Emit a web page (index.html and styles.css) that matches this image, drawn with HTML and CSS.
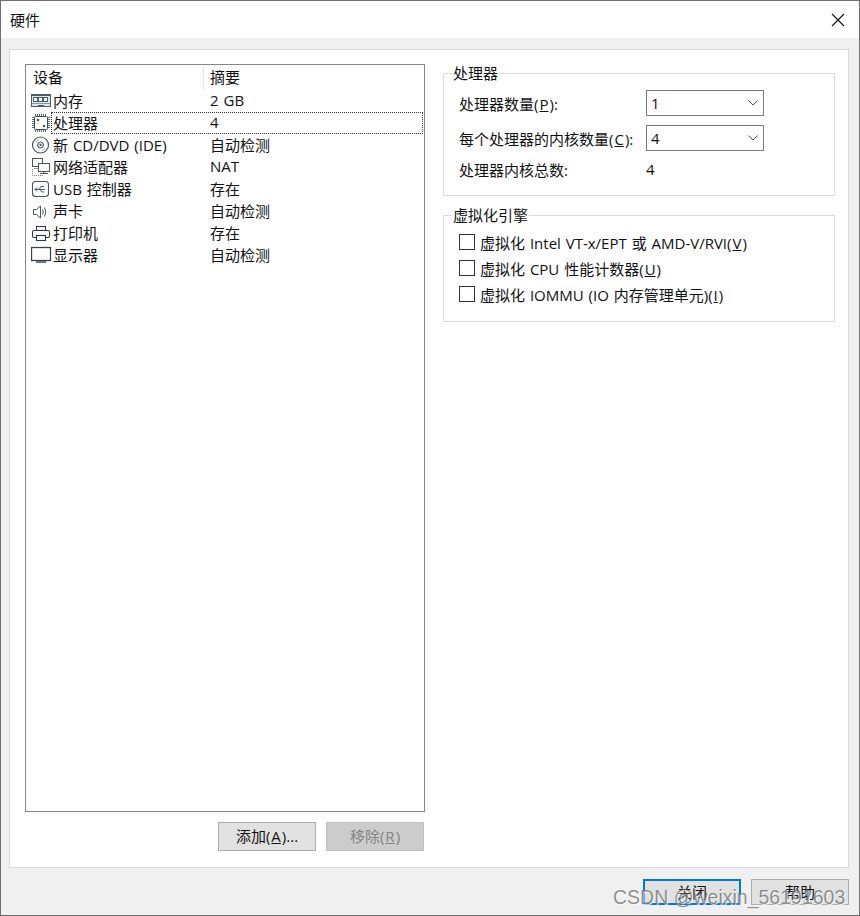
FILE: index.html
```html
<!DOCTYPE html>
<html lang="zh-CN">
<head>
<meta charset="utf-8">
<title>硬件</title>
<link rel="stylesheet" href="styles.css">
</head>
<body>
<div class="window">
  <header class="titlebar">
    <span class="title">硬件</span>
    <svg class="close" width="14" height="14" viewBox="0 0 14 14"><path d="M1 1l12 12M13 1L1 13" stroke="#111" stroke-width="1.1" fill="none"/></svg>
  </header>
  <div class="client">
    <main class="panel">
      <section class="left">
        <div class="listbox">
          <div class="list-head">
            <span class="col-a">设备</span>
            <span class="col-b">摘要</span>
          </div>
          <div class="row">
            <span class="ico"><svg width="21" height="22" viewBox="0 0 21 22"><rect x=".5" y="4.500" width="19" height="12" fill="#dfe6ea" stroke="#4f5b63"/><path d="M1 5.500h18" stroke="#4f5b63"/><rect x="2.500" y="7.500" width="4" height="4" fill="#fff" stroke="#4f5b63"/><rect x="7.500" y="7.500" width="4" height="4" fill="#fff" stroke="#4f5b63"/><rect x="12.500" y="7.500" width="4" height="4" fill="#fff" stroke="#4f5b63"/><path d="M1 13.500h18" stroke="#8b969d"/><path d="M7 15.500h6" stroke="#4f5b63"/></svg></span>
            <span class="name">内存</span><span class="val">2 GB</span>
          </div>
          <div class="row selected">
            <span class="ico"><svg width="21" height="22" viewBox="0 0 21 22"><rect x="3.500" y="4.500" width="13" height="13" rx="1" fill="#fff" stroke="#3f4b53"/><path d="M4.500 2v2M6.500 2v2M8.500 2v2M10.500 2v2M12.500 2v2M14.500 2v2M4.500 18v2M6.500 18v2M8.500 18v2M10.500 18v2M12.500 18v2M14.500 18v2M1 5.500h2M1 7.500h2M1 9.500h2M1 11.500h2M1 13.500h2M1 15.500h2M17 5.500h2M17 7.500h2M17 9.500h2M17 11.500h2M17 13.500h2M17 15.500h2" stroke="#5d6a72"/><rect x="6" y="7" width="2" height="2" fill="#3f4b53"/><rect x="12" y="13" width="2" height="2" fill="#3f4b53"/></svg></span>
            <span class="name focus-name">处理器</span><span class="val">4</span>
          </div>
          <div class="row">
            <span class="ico"><svg width="21" height="22" viewBox="0 0 21 22"><circle cx="9.500" cy="11" r="8" fill="#fff" stroke="#4a565e" stroke-width="1.200"/><circle cx="9.500" cy="11" r="3" fill="#d5dde1" stroke="#4a565e"/><circle cx="9.500" cy="11" r="1" fill="#4a565e"/><path d="M5 8a5.500 5.500 0 0 1 2.500-2.500M14 14a5.500 5.500 0 0 1-2.500 2.500" stroke="#8b969d" fill="none"/></svg></span>
            <span class="name">新 CD/DVD (IDE)</span><span class="val">自动检测</span>
          </div>
          <div class="row">
            <span class="ico"><svg width="21" height="22" viewBox="0 0 21 22"><rect x="1.500" y="2.500" width="10" height="8" fill="#fff" stroke="#4a565e"/><path d="M3 12.500h4" stroke="#8b969d"/><rect x="7.500" y="7.500" width="11" height="8" fill="#fff" stroke="#4a565e"/><path d="M13 15.500v2M9 17.500h8" stroke="#4a565e"/><path d="M1.500 13v6.500h11" stroke="#6d7981" stroke-dasharray="1 1" fill="none"/></svg></span>
            <span class="name">网络适配器</span><span class="val">NAT</span>
          </div>
          <div class="row">
            <span class="ico"><svg width="21" height="22" viewBox="0 0 21 22"><rect x="1.500" y="3.500" width="16" height="15" rx="3" fill="#fff" stroke="#4a565e" stroke-width="1.100"/><path d="M4 11.500h10M4 11.500l2-2M4 11.500l2 2M8 11.500l2-3h3M9 11.500l2 2.500h2" stroke="#4a565e" fill="none"/></svg></span>
            <span class="name">USB 控制器</span><span class="val">存在</span>
          </div>
          <div class="row">
            <span class="ico"><svg width="21" height="22" viewBox="0 0 21 22"><path d="M2.500 9.500h3l4-3.500v12l-4-3.500h-3z" fill="#fff" stroke="#4a565e"/><path d="M11.500 9.500q1.500 2.500 0 5M13.500 7.500q2.500 4.500 0 9" stroke="#4a565e" fill="none"/></svg></span>
            <span class="name">声卡</span><span class="val">自动检测</span>
          </div>
          <div class="row">
            <span class="ico"><svg width="21" height="22" viewBox="0 0 21 22"><rect x="5.500" y="4.500" width="9" height="4" fill="#fff" stroke="#2e383f" stroke-width="1.100"/><rect x="1.500" y="8.500" width="17" height="7" rx="1.500" fill="#fff" stroke="#2e383f" stroke-width="1.100"/><rect x="5.500" y="13.500" width="9" height="5" fill="#fff" stroke="#2e383f" stroke-width="1.100"/></svg></span>
            <span class="name">打印机</span><span class="val">存在</span>
          </div>
          <div class="row">
            <span class="ico"><svg width="21" height="22" viewBox="0 0 21 22"><rect x=".5" y="3.500" width="19" height="13" fill="#fff" stroke="#37424a" stroke-width="1.300"/><path d="M5 18h10" stroke="#6b767d" stroke-width="2"/></svg></span>
            <span class="name">显示器</span><span class="val">自动检测</span>
          </div>
        </div>
        <div class="list-actions">
          <button class="btn">添加(<u>A</u>)...</button>
          <button class="btn disabled">移除(<u>R</u>)</button>
        </div>
      </section>
      <section class="right">
        <fieldset class="group group-cpu">
          <legend>处理器</legend>
          <div class="form-row">
            <label class="form-label">处理器数量(<u>P</u>):</label>
            <div class="combo"><span>1</span><svg width="10" height="6" viewBox="0 0 10 6"><path d="M.5.500L5 5 9.500.5" stroke="#555" fill="none"/></svg></div>
          </div>
          <div class="form-row">
            <label class="form-label">每个处理器的内核数量(<u>C</u>):</label>
            <div class="combo"><span>4</span><svg width="10" height="6" viewBox="0 0 10 6"><path d="M.5.500L5 5 9.500.5" stroke="#555" fill="none"/></svg></div>
          </div>
          <div class="form-row total">
            <span class="form-label">处理器内核总数:</span>
            <span class="total-val">4</span>
          </div>
        </fieldset>
        <fieldset class="group group-virt">
          <legend>虚拟化引擎</legend>
          <div class="check"><span class="box"></span><span>虚拟化 Intel VT-x/EPT 或 AMD-V/RVI(<u>V</u>)</span></div>
          <div class="check"><span class="box"></span><span>虚拟化 CPU 性能计数器(<u>U</u>)</span></div>
          <div class="check"><span class="box"></span><span>虚拟化 IOMMU (IO 内存管理单元)(<u>I</u>)</span></div>
        </fieldset>
      </section>
    </main>
    <footer class="footer">
      <button class="btn primary">关闭</button>
      <button class="btn">帮助</button>
    </footer>
  </div>
  <div class="watermark">CSDN @weixin_56191603</div>
</div>
</body>
</html>
```
FILE: styles.css
```css
* { box-sizing: border-box; }
html, body { margin: 0; padding: 0; }
body {
  width: 860px;
  height: 916px;
  overflow: hidden;
  font-family: "Open Sans", "Noto Sans CJK SC", sans-serif;
  font-size: 15px;
  word-spacing: 1px;
  color: #111;
  background: #fff;
}
u { padding: 0 1px; }
.window {
  position: relative;
  width: 860px;
  height: 916px;
  display: flex;
  flex-direction: column;
  border: 1px solid #6e6e6e;
}
.titlebar {
  height: 37px;
  flex: none;
  display: flex;
  align-items: center;
  justify-content: space-between;
  padding: 0 14px 0 9px;
  background: #fff;
}
.client {
  flex: 1;
  display: flex;
  flex-direction: column;
  padding: 11px 10px 0 8px;
  background: #f0f0f0;
}
.panel {
  height: 819px;
  flex: none;
  display: flex;
  gap: 18px;
  padding: 14px 14px 15px 15px;
  background: #fff;
  border: 1px solid #dadada;
}
.left {
  width: 400px;
  flex: none;
  display: flex;
  flex-direction: column;
}
.listbox {
  height: 748px;
  flex: none;
  border: 1px solid #828790;
  background: #fff;
}
.list-head {
  height: 25px;
  display: flex;
  align-items: center;
  padding-left: 7px;
}
.col-a { width: 170px; padding-bottom: 2px; }
.col-b {
  flex: 1;
  height: 24px;
  line-height: 22px;
  padding-left: 6px;
  border-left: 1px solid #e5e5e5;
}
.row {
  height: 22px;
  display: flex;
  align-items: center;
}
.ico {
  width: 27px;
  height: 22px;
  flex: none;
  display: flex;
  padding-left: 5px;
}
.name {
  width: 157px;
  flex: none;
  padding-bottom: 2px;
  white-space: nowrap;
}
.val { padding-bottom: 2px; white-space: nowrap; }
.selected {
  position: relative;
}
.selected::after {
  content: "";
  position: absolute;
  left: 25px;
  right: 1px;
  top: 0;
  bottom: 0;
  border: 1px dotted #333;
}
.list-actions {
  display: flex;
  justify-content: flex-end;
  gap: 10px;
  margin-top: 10px;
  margin-right: 1px;
}
.btn {
  width: 98px;
  height: 29px;
  padding: 0 0 2px;
  background: #e1e1e1;
  border: 1px solid #adadad;
  border-radius: 0;
  font-family: inherit;
  font-size: 15px;
  color: #111;
}
.btn.disabled {
  background: #cccccc;
  border-color: #bfbfbf;
  color: #838383;
}
.btn.primary {
  border: 2px solid #0078d7;
}
.right {
  width: 392px;
  flex: none;
  display: flex;
  flex-direction: column;
}
.group {
  margin: 0;
  padding: 0 15px;
  border: 1px solid #dcdcdc;
  min-width: 0;
}
.group legend {
  padding: 0 1px;
  margin-left: -7px;
  line-height: 18px;
}
.group-cpu {
  height: 132px;
  padding-top: 8px;
}
.group-virt {
  height: 116px;
  margin-top: 10px;
  padding-top: 5px;
}
.form-row {
  display: flex;
  align-items: center;
  height: 26px;
  margin-bottom: 9px;
}
.form-row.total { height: 20px; margin-top: -1px; }
.form-label {
  width: 187px;
  flex: none;
  white-space: nowrap;
}
.combo {
  width: 118px;
  height: 26px;
  display: flex;
  align-items: center;
  justify-content: space-between;
  padding: 0 5px 0 4px;
  border: 1px solid #7a7a7a;
}
.check {
  display: flex;
  align-items: center;
  gap: 5px;
  height: 26px;
  white-space: nowrap;
}
.box {
  width: 16px;
  height: 16px;
  flex: none;
  border: 1px solid #333;
  background: #fff;
}
.footer {
  flex: 1;
  display: flex;
  justify-content: flex-end;
  align-items: flex-start;
  gap: 10px;
  padding: 11px 0 0;
}
.footer .btn { height: 26px; }
.watermark {
  position: absolute;
  left: 612px;
  top: 884px;
  font-family: "Liberation Sans", sans-serif;
  font-size: 19.500px;
  word-spacing: 0;
  line-height: 24px;
  color: rgba(110, 110, 110, 0.75);
  text-shadow: 1px 1px 1px rgba(255, 255, 255, 0.8);
  white-space: nowrap;
}
```
